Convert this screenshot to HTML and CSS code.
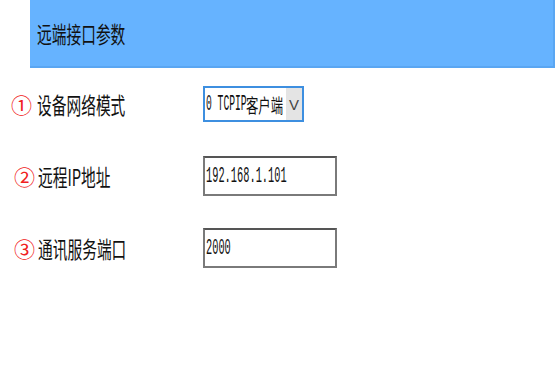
FILE: index.html
```html
<!DOCTYPE html>
<html>
<head>
	<meta charset="utf-8" />
	<title>远端接口参数</title>
	<link rel="stylesheet" href="styles.css">
</head>
<body>
	<div class="header">
		<span class="squeeze">远端接口参数</span>
	</div>
	<div class="form">
		<div class="row">
			<div class="label">
				<span class="num">①</span>
				<span class="squeeze">设备网络模式</span>
			</div>
			<div class="select">
				<span class="value"><span class="mono">0 TCPIP</span><span class="cn">客户端</span></span>
				<span class="arrow">V</span>
			</div>
		</div>
		<div class="row">
			<div class="label">
				<span class="num num-wide">②</span>
				<span class="squeeze">远程IP地址</span>
			</div>
			<div class="input"><span class="mono">192.168.1.101</span></div>
		</div>
		<div class="row">
			<div class="label">
				<span class="num num-wide">③</span>
				<span class="squeeze">通讯服务端口</span>
			</div>
			<div class="input"><span class="mono">2000</span></div>
		</div>
	</div>
</body>
</html>
```

FILE: styles.css
```css
body {
	margin: 0;
	padding: 0;
	background: #fff;
	font-family: "Noto Sans CJK SC", sans-serif;
	color: #111;
}

.squeeze {
	display: inline-block;
	transform: scaleX(0.64);
	transform-origin: left center;
	white-space: nowrap;
}

.header {
	margin-left: 30px;
	height: 66px;
	background: #66b3ff;
	border-bottom: 2px solid #5aa6f2;
	border-right: 2px solid #5aa6f2;
	display: flex;
	align-items: center;
	padding-left: 7px;
	font-size: 23px;
}

.row {
	display: grid;
	grid-template-columns: 203px auto;
	align-items: center;
	height: 72px;
}

.label {
	display: flex;
	align-items: center;
	font-size: 23px;
}

.num {
	color: #f02020;
	font-size: 21px;
	width: 26px;
	padding-left: 11px;
}

.num-wide {
	padding-left: 14px;
	width: 24px;
}

.mono {
	font-family: "Liberation Mono", monospace;
	font-size: 22px;
	display: inline-block;
	transform: scaleX(0.47);
	transform-origin: left center;
	white-space: pre;
}

.select {
	width: 97px;
	height: 32px;
	border: 2px solid #3d8fe0;
	display: flex;
	align-items: center;
	overflow: hidden;
}

.select .value {
	flex: 1;
	display: flex;
	align-items: center;
	padding-left: 1px;
	white-space: nowrap;
	overflow: hidden;
}

.select .mono {
	transform: scaleX(0.44);
	margin-right: -52px;
}

.select .cn {
	display: inline-block;
	font-size: 19px;
	transform: scaleX(0.65);
	transform-origin: left center;
	margin-right: -20px;
}

.arrow {
	flex: none;
	width: 16px;
	height: 100%;
	background: #e4e4e4;
	color: #444;
	display: flex;
	align-items: center;
	justify-content: center;
	font-family: "Liberation Sans", sans-serif;
	font-size: 15px;
}

.input {
	width: 129px;
	height: 36px;
	border: 2px solid #7a7a7a;
	border-top-color: #555;
	display: flex;
	align-items: center;
	padding-left: 1px;
	overflow: hidden;
}
```
